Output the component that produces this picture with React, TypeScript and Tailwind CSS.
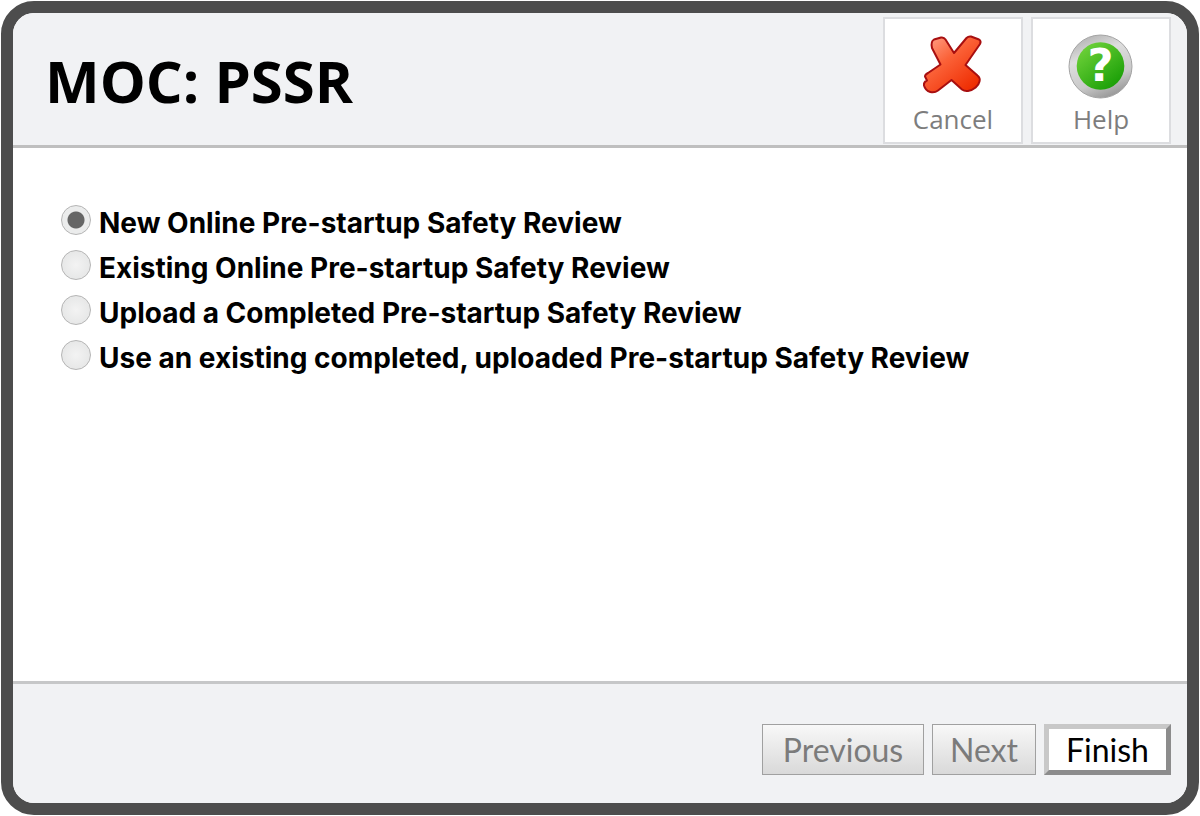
import * as React from "react";

type ToolButtonProps = {
  label: string;
  children: React.ReactNode;
};

type ReviewOption = {
  id: string;
  label: string;
};

const reviewOptions: ReviewOption[] = [
  { id: "new-online", label: "New Online Pre-startup Safety Review" },
  { id: "existing-online", label: "Existing Online Pre-startup Safety Review" },
  { id: "upload", label: "Upload a Completed Pre-startup Safety Review" },
  {
    id: "existing-upload",
    label: "Use an existing completed, uploaded Pre-startup Safety Review",
  },
];

const CancelIcon = () => (
  <svg width="66" height="66" viewBox="0 0 66 66" aria-hidden="true">
    <defs>
      <linearGradient id="cancelFill" x1="0.1" y1="0.05" x2="0.85" y2="0.95">
        <stop offset="0" stopColor="#ff9a80" />
        <stop offset="0.4" stopColor="#fb6238" />
        <stop offset="1" stopColor="#ee2b00" />
      </linearGradient>
    </defs>
    <path
      d="M14 6.5 L21 4.500 Q24 4 25.500 6.500 L34 20 L46.500 5 Q48.500 3 51 3.500 L59 6.500 Q61.500 8 60 11 L45.500 32 L57.500 42.500 Q60.500 45 59.500 48.500 C58.500 53 54 57 48 58 Q44.500 58.500 42 56.500 L31.500 47 L18 57.500 C14 60.500 6 60 4 52.500 Q3.500 49 7 47.500 L5 43.500 Q5 41.500 8 40 L20.500 31.500 L12 15 Q10.500 8.500 14 6.5 Z"
      fill="url(#cancelFill)"
      stroke="#a80f10"
      strokeWidth="2"
      strokeLinejoin="round"
    />
  </svg>
);

const HelpIcon = () => (
  <svg width="66" height="66" viewBox="0 0 66 66" aria-hidden="true">
    <defs>
      <linearGradient id="helpRing" x1="0.3" y1="0" x2="0.7" y2="1">
        <stop offset="0" stopColor="#b4b4b4" />
        <stop offset="0.3" stopColor="#dedede" />
        <stop offset="0.7" stopColor="#c9c9c9" />
        <stop offset="1" stopColor="#929292" />
      </linearGradient>
      <linearGradient id="helpFill" x1="0.15" y1="0.1" x2="0.8" y2="0.9">
        <stop offset="0" stopColor="#6cd038" />
        <stop offset="1" stopColor="#1ca008" />
      </linearGradient>
    </defs>
    <circle cx="32.5" cy="33.5" r="31.5" fill="url(#helpRing)" stroke="#a3a3a3" strokeWidth="1" />
    <circle cx="32.5" cy="33" r="23.800" fill="url(#helpFill)" />
    <text
      x="32.5"
      y="48"
      textAnchor="middle"
      fill="#ffffff"
      className="font-['DejaVu_Sans'] text-[45px] font-bold"
    >
      ?
    </text>
  </svg>
);

const ToolButton: React.FC<ToolButtonProps> = ({ label, children }) => (
  <button
    type="button"
    className="flex w-[140px] flex-col items-center border-2 border-[#dcdde0] bg-white pt-3.5 pb-0.5 text-[26px] leading-[41px] text-[#7d7d7d]"
  >
    {children}
    {label}
  </button>
);

export default function App() {
  const [selected, setSelected] = React.useState("new-online");

  return (
    <div className="flex min-h-screen bg-white p-px font-['Open_Sans',sans-serif] text-black">
      <form
        className="flex flex-1 flex-col overflow-hidden rounded-[33px] border-12 border-[#4d4d4d] bg-white"
        onSubmit={(e) => e.preventDefault()}
      >
        <header className="flex items-center justify-between border-b-3 border-[#bfbfbf] bg-[#f1f2f4] pt-1 pr-4 pb-px pl-8">
          <h1 className="text-[58px] leading-[72px] font-bold">MOC: PSSR</h1>
          <div className="flex gap-2">
            <ToolButton label="Cancel">
              <CancelIcon />
            </ToolButton>
            <ToolButton label="Help">
              <HelpIcon />
            </ToolButton>
          </div>
        </header>

        {/* Review type */}
        <main className="flex-1 pt-[57px] pr-8 pl-12">
          {reviewOptions.map((option) => (
            <div key={option.id} className="flex min-h-[45px] items-start gap-2">
              <input
                type="radio"
                id={option.id}
                name="review"
                checked={selected === option.id}
                onChange={() => setSelected(option.id)}
                className="size-[30px] shrink-0 appearance-none rounded-full border border-[#b5b5b5] bg-radial from-[#f3f3f3] to-[#e2e3e3] checked:bg-[radial-gradient(circle,#666_8px,#ebecec_9px)]"
              />
              <label
                htmlFor={option.id}
                className="font-[Inter,sans-serif] text-[28px] leading-9 font-bold"
              >
                {option.label}
              </label>
            </div>
          ))}
        </main>

        {/* Wizard navigation */}
        <footer className="flex justify-end gap-2 border-t-3 border-[#c6c7c8] bg-[#f1f2f4] pt-10 pr-4 pb-7 font-[Lato,sans-serif] text-[32px] leading-[49px]">
          <button
            type="button"
            disabled
            className="min-w-[162px] border border-[#a0a0a0] bg-linear-to-b from-[#f8f8f8] to-[#d9d9d9] px-4 text-[#7b7b7b]"
          >
            Previous
          </button>
          <button
            type="button"
            disabled
            className="min-w-[104px] border border-[#a0a0a0] bg-linear-to-b from-[#f8f8f8] to-[#d9d9d9] px-4 text-[#7b7b7b]"
          >
            Next
          </button>
          <button
            type="submit"
            className="min-w-[127px] border-5 border-t-[#c8c8c8] border-r-[#8c8c8c] border-b-[#8c8c8c] border-l-[#c8c8c8] bg-white px-4 leading-[41px]"
          >
            Finish
          </button>
        </footer>
      </form>
    </div>
  );
}
